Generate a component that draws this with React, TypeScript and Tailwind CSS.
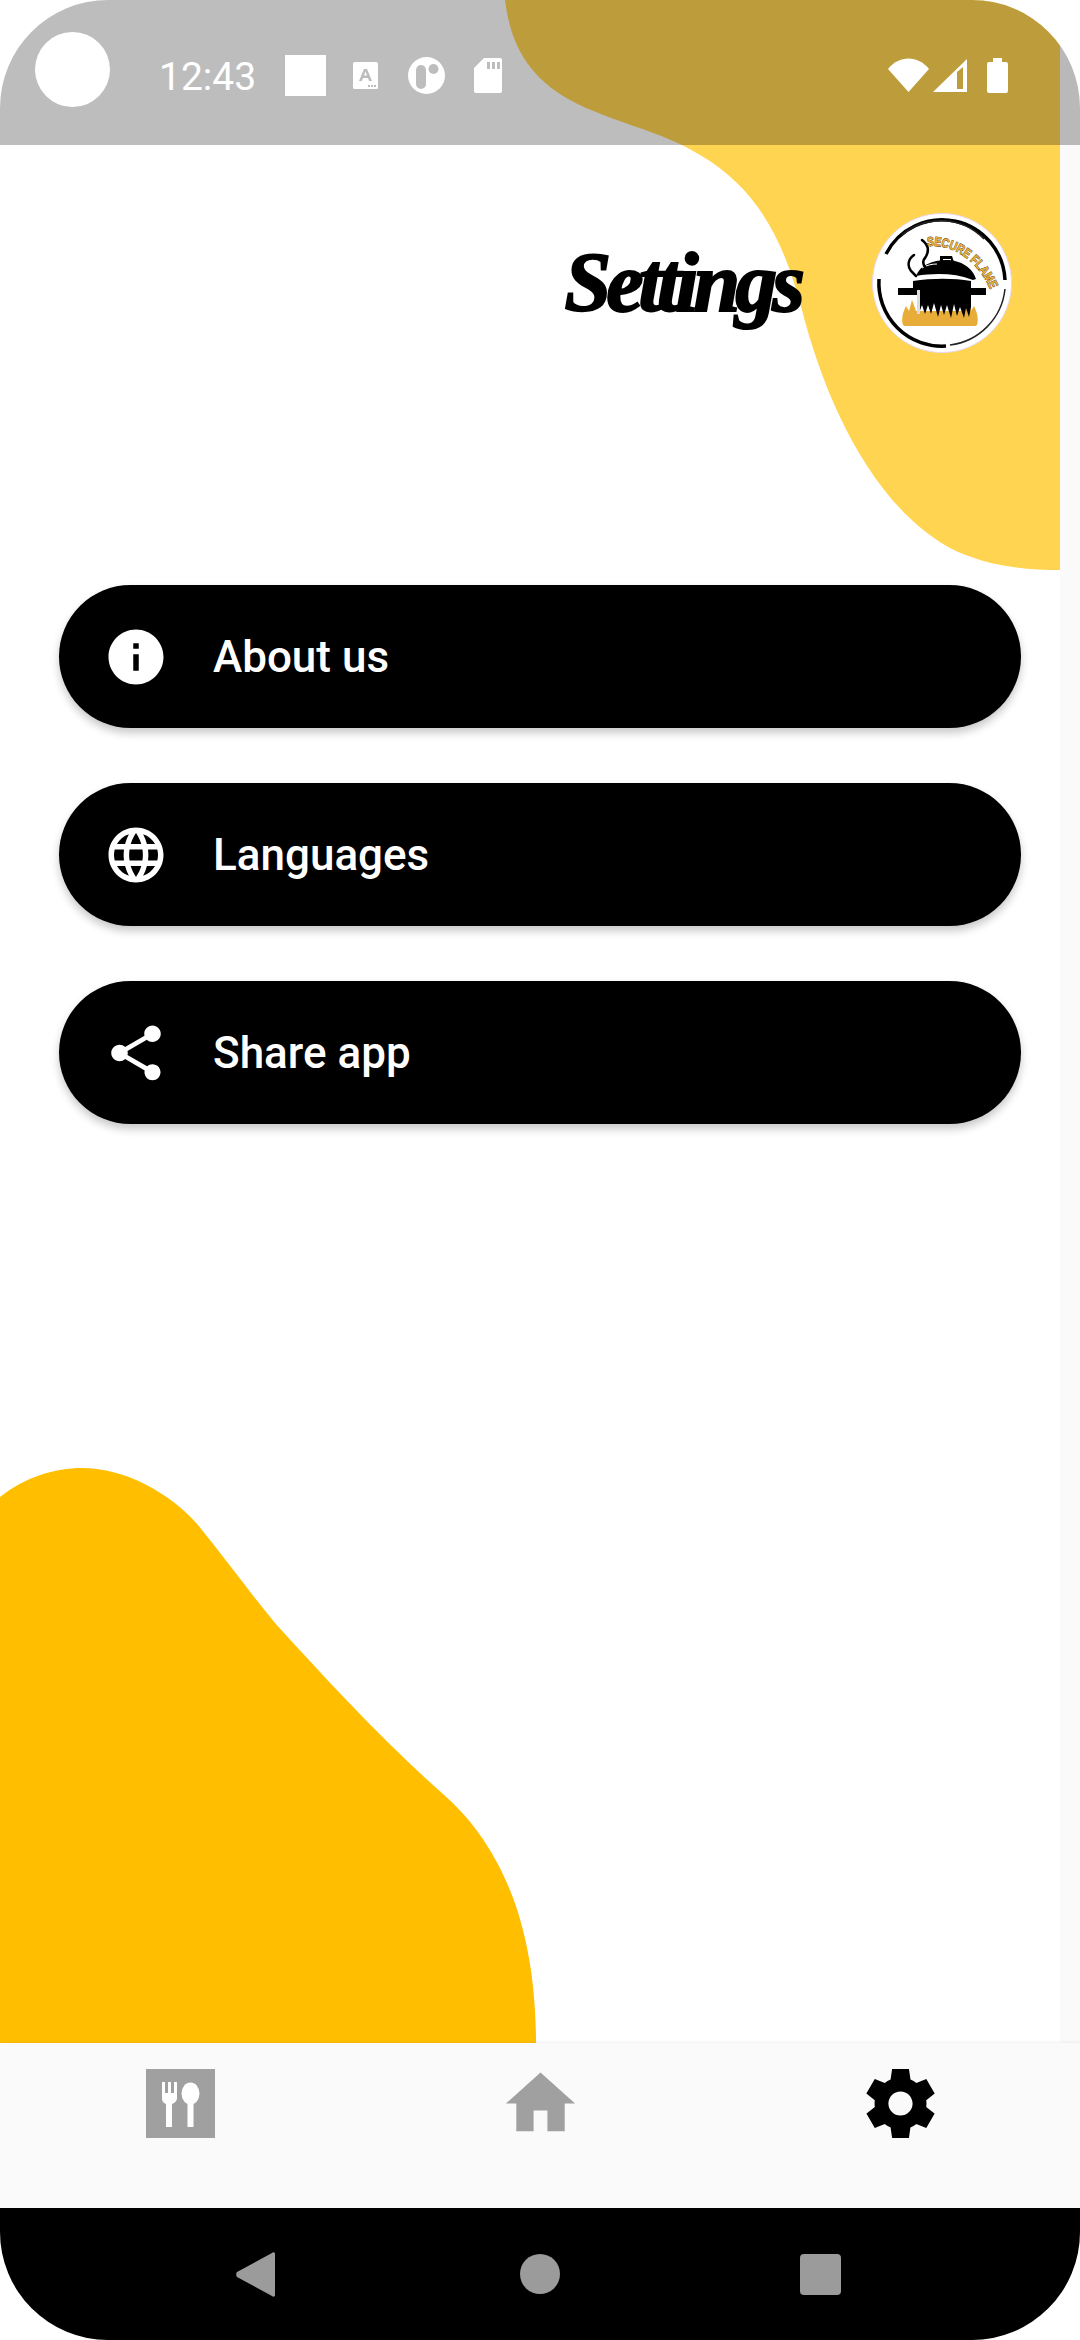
import type { ReactNode } from 'react';
import { MdInfo, MdLanguage, MdShare } from 'react-icons/md';

function TopBlob() {
  return (
    <svg className="absolute left-0 top-0" width="1060" height="572" viewBox="0 0 1060 572">
      <path
        d="M505 0C510 40 525 75 570 100C610 122 660 130 700 155C760 190 785 245 802 310C825 400 872 505 950 548C985 566 1025 570 1060 570V0Z"
        fill="#ffd450"
      />
    </svg>
  );
}

function BottomBlob() {
  return (
    <svg className="absolute bottom-0 left-0" width="540" height="580" viewBox="0 0 540 580">
      <path
        d="M0 34C25 14 55 5 82 5C125 5 170 30 198 62C225 95 250 130 275 160C325 215 385 280 443 331C490 372 536 445 536 580H0Z"
        fill="#ffbf00"
      />
    </svg>
  );
}

function Logo() {
  return (
    <svg width="140" height="140" viewBox="0 0 140 140" className="shrink-0">
      <circle cx="70" cy="70" r="69.500" fill="#fff" stroke="#e9d8f0" strokeWidth="1" />
      {/* brush ring */}
      <path d="M14 41A63 63 0 0 1 133 67" fill="none" stroke="#000" strokeWidth="3.500" />
      <path d="M30 22A60 60 0 0 1 112 26" fill="none" stroke="#222" strokeWidth="1.500" />
      <path d="M7 66A63 63 0 0 0 74 133" fill="none" stroke="#000" strokeWidth="3.500" />
      <path d="M133 76A63 63 0 0 1 78 132" fill="none" stroke="#222" strokeWidth="1.500" />
      {/* flames */}
      <path
        d="M31 112c-2-6 0-13 3-19l3 5 3-11 3 8 1 3h48l1-3 3-8 3 11 3-5c3 6 5 13 3 19-1 1-2 1-4 1H35c-2 0-3 0-4-1z"
        fill="#e8ad38"
      />
      {/* pot */}
      <path d="M44 63c4-11 17-16 30-16 15 0 27 8 30 19l-3 1c-18-7-38-7-57-4z" fill="#000" />
      <path d="M68 50v-7h12l2 6-3 1v-4h-8v4z" fill="#000" />
      <path d="M50 55c5-3 10-4 15-4" stroke="#fff" strokeWidth="1" fill="none" />
      <path
        d="M26 75h15v-7c20-3 40-3 58 0v7h15v7H99v12l-2 10-3-9-2 10-4-11-3 9-3-12-3 14-4-13-3 10-3-10-3 12-4-14-3 11-3-9-3 9-3-9-3 8-2-8V82H26z"
        fill="#000"
      />
      <path d="M45 77h3v24h-3z" fill="#ddd" />
      {/* steam */}
      <path
        d="M50 27c8 6 7 12 3 18-3 3-2 6 0 9M42 42c-6 4-7 11-3 16l5 5"
        fill="none"
        stroke="#000"
        strokeWidth="2.500"
        strokeLinecap="round"
      />
      <defs>
        <path id="logo-arc" d="M55 33C82 31 106 48 119 78" />
      </defs>
      <text
        fontFamily="'Liberation Sans', sans-serif"
        fontSize="13"
        fontWeight="700"
        fill="#e8ad38"
        stroke="#4a3000"
        strokeWidth="0.800"
        paintOrder="stroke"
      >
        <textPath href="#logo-arc" textLength="82" lengthAdjust="spacingAndGlyphs">
          SECURE FLAME
        </textPath>
      </text>
    </svg>
  );
}

function StatusBar() {
  return (
    <div className="absolute left-0 right-0 top-0 flex h-[145px] items-center bg-[rgba(0,0,0,0.26)] text-white">
      <div className="mb-[6px] ml-[35px] h-[75px] w-[75px] rounded-full bg-white" />
      <span className="ml-[49px] mt-[10px] font-['Roboto',sans-serif] text-[39px] font-normal leading-none">12:43</span>
      <div className="mb-[-6px] ml-[29px] h-[41px] w-[41px] bg-white" />
      <svg className="ml-[27px] mt-[6px]" width="25" height="27" viewBox="0 0 25 27">
        <rect width="25" height="27" rx="1.500" fill="#fff" />
        <path d="M6 19 11 7h3l5 12h-3l-1-3h-5l-1 3zM11 13.500h3l-1.500-4z" fill="#bdbdbd" fillRule="evenodd" />
        <path d="M15 23h2v2h-2zM18 23h2v2h-2zM21 23h2v2h-2z" fill="#bdbdbd" />
      </svg>
      <svg className="ml-[30px] mt-[5px]" width="37" height="37" viewBox="0 0 37 37">
        <circle cx="18.500" cy="18.500" r="18.500" fill="#fff" />
        <rect x="8" y="8" width="10" height="24" rx="5" fill="#bdbdbd" />
        <circle cx="25.500" cy="12" r="5" fill="#bdbdbd" />
      </svg>
      <svg className="ml-[29px] mt-[6px]" width="28" height="35" viewBox="0 0 28 35">
        <path d="M10 0h16a2 2 0 0 1 2 2v31a2 2 0 0 1-2 2H2a2 2 0 0 1-2-2V10z" fill="#fff" />
        <path d="M13 4h3v7h-3zM18 4h3v7h-3zM23 4h3v7h-3z" fill="#bdbdbd" />
      </svg>
      <svg className="ml-auto mt-[5px]" width="41" height="34" viewBox="0 0 41 34">
        <path d="M0 11C11-3 30-3 41 11L20.500 34z" fill="#fff" />
      </svg>
      <svg className="ml-[4px] mt-[5px]" width="34" height="33" viewBox="0 0 34 33">
        <path d="M0 33 34 0v33zM24 13v17h6V8z" fill="#fff" fillRule="evenodd" />
      </svg>
      <svg className="ml-[20px] mr-[72px] mt-[5px]" width="21" height="35" viewBox="0 0 21 35">
        <path d="M6 0h9v4h4a2 2 0 0 1 2 2v27a2 2 0 0 1-2 2H2a2 2 0 0 1-2-2V6a2 2 0 0 1 2-2h4z" fill="#fff" />
      </svg>
    </div>
  );
}

function MenuButton({ icon, label }: { icon: ReactNode; label: string }) {
  return (
    <div className="flex h-[143px] items-center gap-[44px] rounded-full bg-black pl-[44px] text-white shadow-[0_5px_8px_rgba(0,0,0,0.22)]">
      {icon}
      <span className="font-['Roboto',sans-serif] text-[44px] font-medium leading-none">{label}</span>
    </div>
  );
}

function BottomNav() {
  return (
    <nav className="relative grid h-[165px] grid-cols-3 bg-[#fafafa] pt-[26px] shadow-[0_-1px_3px_rgba(0,0,0,0.06)]">
      <div className="flex justify-center">
        <svg width="69" height="69" viewBox="0 0 69 69">
          <rect width="69" height="69" fill="#a0a0a0" />
          <path d="M16 13h3v11h3V13h3v11h3V13h3v16c0 3-2 5-5 6v23h-6V35c-3-1-4-3-4-6z" fill="#fff" />
          <ellipse cx="44.500" cy="24.500" rx="9" ry="11" fill="#fff" />
          <rect x="41.500" y="30" width="6" height="28" fill="#fff" />
        </svg>
      </div>
      <div className="flex justify-center">
        <svg width="83" height="83" viewBox="0 0 24 24" className="mt-[-7px]">
          <path d="M10 20v-6h4v6h5v-8h3L12 3 2 12h3v8z" fill="#a0a0a0" />
        </svg>
      </div>
      <div className="flex justify-center">
        <svg width="83" height="83" viewBox="0 0 24 24" className="mt-[-7px]">
          <path
            d="M19.440 12.990l-.01.02c.04-.33.08-.67.08-1.010 0-.34-.03-.66-.07-.99l.01.02 2.440-1.920-2.430-4.220-2.870 1.160.01.01c-.52-.4-1.090-.74-1.710-1h.01L14.440 2H9.570l-.44 3.070h.01c-.62.26-1.190.6-1.710 1l.01-.01-2.880-1.170-2.440 4.220 2.440 1.920.01-.02c-.04.33-.07.65-.07.99 0 .34.03.68.08 1.010l-.01-.02-2.100 1.650-.33.26 2.430 4.200 2.880-1.150-.02-.04c.53.41 1.100.75 1.730 1.010h-.03L9.580 22h4.850s.03-.18.06-.42l.38-2.650h-.01c.62-.26 1.200-.6 1.730-1.010l-.02.04 2.880 1.150 2.430-4.200s-.14-.12-.33-.26l-2.110-1.660zM12 15.500c-1.930 0-3.500-1.570-3.500-3.500s1.570-3.500 3.500-3.500 3.500 1.570 3.500 3.500-1.570 3.500-3.500 3.500z"
            fill="#000"
          />
        </svg>
      </div>
    </nav>
  );
}

export default function App() {
  return (
    <div className="flex h-[2340px] w-[1080px] flex-col overflow-hidden rounded-[108px] bg-white">
      <main className="relative flex-1">
        {/* 배경 */}
        <div className="absolute bottom-0 right-0 top-0 w-[20px] bg-[#fafafa]" />
        <TopBlob />
        <BottomBlob />

        <div className="relative pt-[213px]">
          <div className="flex items-center justify-end gap-[72px] pr-[68px]">
            <h1 className="font-['Liberation_Serif',serif] text-[84px] font-bold italic leading-none tracking-[-5px] text-black [-webkit-text-stroke:2px_black]">
              Settings
            </h1>
            <Logo />
          </div>

          <div className="mx-[59px] mt-[232px] flex flex-col gap-[55px]">
            <MenuButton icon={<MdInfo size={66} />} label="About us" />
            <MenuButton icon={<MdLanguage size={66} />} label="Languages" />
            <MenuButton icon={<MdShare size={66} />} label="Share app" />
          </div>
        </div>

        <StatusBar />
      </main>

      <BottomNav />

      <div className="flex h-[132px] items-center bg-black pl-[236px]">
        <svg width="39" height="45" viewBox="0 0 39 45">
          <path d="M39 2v41c0 2-2 2-3 1L1 25c-1-1-1-4 0-5L36 1c1-1 3-1 3 1z" fill="#9b9b9b" />
        </svg>
        <div className="ml-[245px] h-[40px] w-[40px] rounded-full bg-[#9b9b9b]" />
        <div className="ml-[240px] h-[41px] w-[41px] rounded-[4px] bg-[#9b9b9b]" />
      </div>
    </div>
  );
}
